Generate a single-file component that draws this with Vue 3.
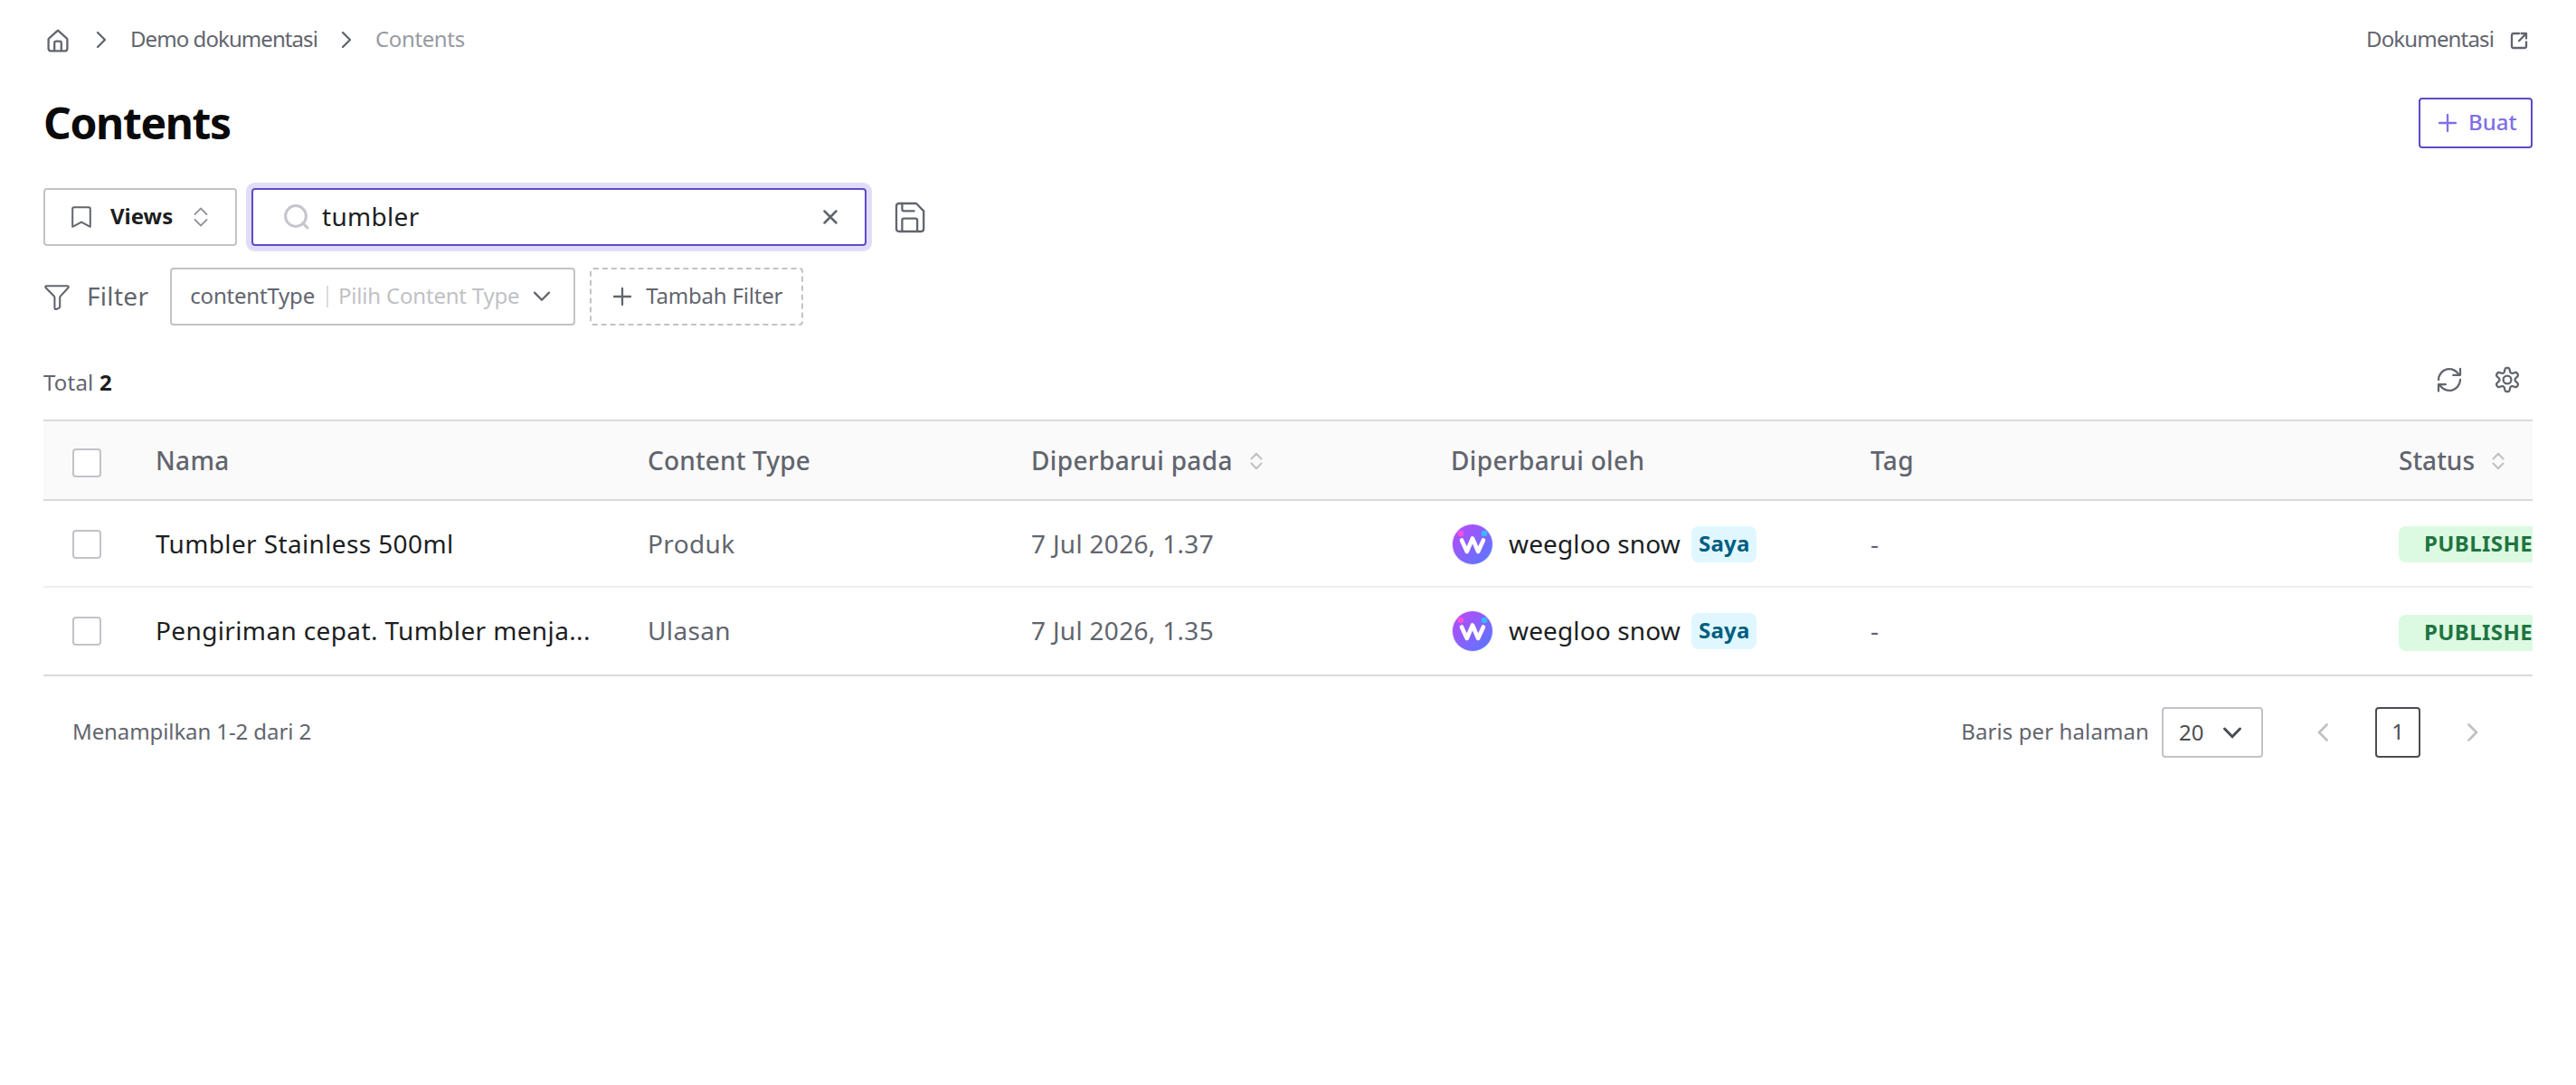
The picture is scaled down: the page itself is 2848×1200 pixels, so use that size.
<script setup>
import { ref } from 'vue'

const query = ref('tumbler')

const rows = [
  { name: 'Tumbler Stainless 500ml', type: 'Produk', updated: '7 Jul 2026, 1.37', by: 'weegloo snow', tag: '-', status: 'PUBLISHED' },
  { name: 'Pengiriman cepat. Tumbler menja...', type: 'Ulasan', updated: '7 Jul 2026, 1.35', by: 'weegloo snow', tag: '-', status: 'PUBLISHED' }
]

// Six-lobed gear outline around the centre of a 32x32 box.
const gear = Array.from({ length: 120 }, (_, i) => {
  const a = (i / 120) * Math.PI * 2
  const r = 10.9 + 2.3 * Math.tanh(1.5 * Math.cos(6 * a)) / Math.tanh(1.5)
  return `${i ? 'L' : 'M'}${(16 + r * Math.sin(a)).toFixed(2)} ${(16 - r * Math.cos(a)).toFixed(2)}`
}).join('') + 'Z'
</script>

<template>
  <div class="page">
    <header class="topbar">
      <nav class="crumbs">
        <svg class="home" viewBox="0 0 24 26" width="24" height="26"><path d="M12 1.6 2.2 10.3Q1.6 10.8 1.6 11.6V21.4Q1.6 24.4 4.6 24.4H19.4Q22.4 24.4 22.4 21.4V11.6Q22.4 10.8 21.8 10.3Z" /><path d="M8.2 24.2V15.5Q8.2 13.6 10 13.6H14Q15.8 13.6 15.8 15.5V24.2" /></svg>
        <svg class="sep s1" viewBox="0 0 12 20" width="12" height="20"><path d="M2 2 10 10 2 18" /></svg>
        <span class="crumb">Demo dokumentasi</span>
        <svg class="sep s2" viewBox="0 0 12 20" width="12" height="20"><path d="M2 2 10 10 2 18" /></svg>
        <span class="crumb current">Contents</span>
      </nav>
      <a class="docs">
        <span>Dokumentasi</span>
        <svg viewBox="0 0 20 20" width="20" height="20"><path d="M10 2H4Q2 2 2 4V16Q2 18 4 18H16Q18 18 18 16V11.5M12.5 2H18V7.5M18 2 10 10.2" /></svg>
      </a>
    </header>

    <div class="titlebar">
      <h1>Contents</h1>
      <button class="create">
        <svg viewBox="0 0 20 20" width="20" height="20"><path d="M10 1V19M1 10H19" /></svg>
        <span>Buat</span>
      </button>
    </div>

    <div class="searchbar">
      <button class="views">
        <svg class="bookmark" viewBox="0 0 22 24" width="22" height="24"><path d="M1.2 22.8V3Q1.2 1.2 3 1.2H19Q20.8 1.2 20.8 3V22.8L11 17.6Z" /></svg>
        <span>Views</span>
        <svg class="updown" viewBox="0 0 16 22" width="16" height="22"><path d="M1.5 8 8 1.5 14.5 8M1.5 14 8 20.5 14.5 14" /></svg>
      </button>
      <div class="search">
        <svg class="lens" viewBox="0 0 28 28" width="28" height="28"><circle cx="13" cy="13" r="11.4" /><path d="M21 21 26 26" /></svg>
        <span class="query">{{ query }}</span>
        <svg class="clear" viewBox="0 0 16 16" width="16" height="16"><path d="M1.5 1.5 14.5 14.5M14.5 1.5 1.5 14.5" /></svg>
      </div>
      <svg class="save" viewBox="0 0 34 34" width="34" height="34"><path d="M5 2H24L32.2 10.4V30Q32.2 33 29.2 33H5Q2 33 2 30V5Q2 2 5 2Z" /><path d="M8.4 2V8.5Q8.4 10.4 10.3 10.4H21.6M8.4 33V20.6Q8.4 18.7 10.3 18.7H23.2Q25.1 18.7 25.1 20.6V33" /></svg>
    </div>

    <div class="filters">
      <svg class="funnel" viewBox="0 0 28 28" width="28" height="28"><path d="M2.6 1.2H25.4Q27.4 1.2 26.4 3.2L17.8 12.6Q17.2 13.3 17.2 14.3V24Q17.2 25 16.4 25.6L13.2 27Q11.6 27.3 11.4 25.6V14.3Q11.4 13.3 10.8 12.6L1.6 3.2Q.6 1.2 2.6 1.2Z" /></svg>
      <span class="flabel">Filter</span>
      <div class="select">
        <span class="key">contentType</span>
        <i class="bar"></i>
        <span class="hint">Pilih Content Type</span>
        <svg viewBox="0 0 20 12" width="20" height="12"><path d="M2 1.6 10 9.8 18 1.6" /></svg>
      </div>
      <button class="add">
        <svg viewBox="0 0 20 20" width="20" height="20"><path d="M10 1V19M1 10H19" /></svg>
        <span>Tambah Filter</span>
      </button>
    </div>

    <div class="summary">
      <span class="total">Total <b>2</b></span>
      <div class="tools">
        <svg viewBox="0 0 32 32" width="32" height="32"><path d="M4 16A12 12 0 0 1 26.5 10.3M28 16A12 12 0 0 1 5.5 21.7M20.2 10.8H28V4M11.8 21.2H4V28.5" /></svg>
        <svg class="gear" viewBox="0 0 32 32" width="32" height="32"><path :d="gear" /><circle cx="16" cy="16" r="4.4" /></svg>
      </div>
    </div>

    <div class="table">
      <div class="row head">
        <div class="check"><i class="box"></i></div>
        <div>Nama</div>
        <div class="tight">Content Type</div>
        <div>Diperbarui pada<svg viewBox="0 0 14 20" width="14" height="20"><path d="M1.5 7.5 7 1.8 12.5 7.5M1.5 12.5 7 18.2 12.5 12.5" /></svg></div>
        <div>Diperbarui oleh</div>
        <div>Tag</div>
        <div class="status-head">Status<svg viewBox="0 0 14 20" width="14" height="20"><path d="M1.5 7.5 7 1.8 12.5 7.5M1.5 12.5 7 18.2 12.5 12.5" /></svg></div>
      </div>
      <div v-for="row in rows" :key="row.name" class="row">
        <div class="check"><i class="box"></i></div>
        <div class="name">{{ row.name }}</div>
        <div>{{ row.type }}</div>
        <div class="date">{{ row.updated }}</div>
        <div class="by">
          <svg class="avatar" viewBox="0 0 48 48" width="48" height="48">
            <defs>
              <linearGradient id="disc" x1="0" y1="0" x2="1" y2="1">
                <stop offset="0.1" stop-color="#b44cfb" />
                <stop offset="0.9" stop-color="#5b76ff" />
              </linearGradient>
            </defs>
            <circle cx="24" cy="24" r="23" fill="#efe9fd" />
            <circle cx="24" cy="24" r="22" fill="url(#disc)" />
            <circle cx="11" cy="12" r="3.3" fill="#f453da" />
            <circle cx="37" cy="12" r="3.3" fill="#37b9f7" />
            <path d="M12 19.5 17.8 32 24 17.5 30.2 32 36 19.5" fill="none" stroke="#fff" stroke-width="4.6" stroke-linecap="round" stroke-linejoin="round" />
          </svg>
          <span class="person">{{ row.by }}</span>
          <span class="me">Saya</span>
        </div>
        <div>{{ row.tag }}</div>
        <div class="state"><span class="badge">{{ row.status }}</span></div>
      </div>
    </div>

    <footer class="pager">
      <span class="range">Menampilkan 1-2 dari 2</span>
      <span class="per">Baris per halaman</span>
      <div class="size">20<svg viewBox="0 0 20 13" width="20" height="13"><path d="M1.5 2 10 10.8 18.5 2" /></svg></div>
      <svg class="arrow prev" viewBox="0 0 12 20" width="12" height="20"><path d="M10.5 1.5 2 10 10.5 18.5" /></svg>
      <span class="num">1</span>
      <svg class="arrow next" viewBox="0 0 12 20" width="12" height="20"><path d="M1.5 1.5 10 10 1.5 18.5" /></svg>
    </footer>
  </div>
</template>

<style>
body { margin: 0; background: #fff; }
</style>

<style scoped>
.page {
  box-sizing: border-box;
  height: 1200px;
  padding: 0 48px;
  overflow: hidden;
  background: #fff;
  color: #62656e;
  font: 24px/32px "Noto Sans", sans-serif;
}
.page *, .page *::before { box-sizing: border-box; }
svg { display: block; flex: none; fill: none; stroke: #62656e; stroke-width: 2.3; stroke-linecap: round; stroke-linejoin: round; overflow: visible; }
button { font: inherit; color: inherit; background: none; padding: 0; margin: 0; }
span, .row > div { white-space: pre; }

.topbar { display: flex; align-items: center; justify-content: space-between; height: 86px; }
.crumbs { display: flex; align-items: center; }
.home { margin: 3px 0 0 4px; }
.sep { margin-top: 2px; }
.s1 { margin-left: 30px; }
.s2 { margin-left: 26px; }
.crumb { margin-left: 26px; letter-spacing: -0.93px; }
.crumb.current { margin-left: 26px; color: #979aa2; letter-spacing: -0.36px; }
.docs { display: flex; align-items: center; padding-right: 5px; letter-spacing: -0.85px; }
.docs svg { margin: 4px 0 0 18px; }

.titlebar { display: flex; align-items: center; justify-content: space-between; height: 100px; }
h1 { margin: 0; color: #0a0a0a; font-size: 48px; line-height: 64px; font-weight: 700; letter-spacing: -1.35px; }
.create { display: flex; align-items: center; width: 126px; height: 56px; padding-left: 20px; border: 2px solid #6049c8; border-radius: 4px; color: #806fe6; font-weight: 500; }
.create svg { stroke: #806fe6; }
.create span { margin-left: 13px; line-height: 32px; margin-top: -2px; }

.searchbar { display: flex; align-items: center; height: 64px; margin-top: 22px; }
.views { display: flex; align-items: center; width: 214px; height: 64px; padding-left: 29px; border: 2px solid #c2c3c7; border-radius: 4px; color: #1c1e22; font-weight: 700; }
.views span { margin-left: 21px; margin-top: -2px; }
.bookmark { stroke-width: 2; }
.updown { margin-left: 23px; stroke: #93959c; stroke-width: 1.8; }
.search { display: flex; align-items: center; width: 680px; height: 64px; margin-left: 16px; padding: 0 30px 0 34px; border: 2px solid #6049c8; border-radius: 4px; box-shadow: 0 0 0 6px #e1ddf8; color: #1c1e22; font-size: 28px; }
.lens { stroke: #c5c6ca; stroke-width: 3; }
.query { flex: 1; margin: -2px 0 0 14px; letter-spacing: 0.3px; }
.clear { stroke-width: 2.5; }
.save { margin: -1px 0 0 31px; }

.filters { display: flex; align-items: center; height: 64px; margin-top: 24px; }
.funnel { margin: 1px 0 0 1px; stroke-width: 2.1; }
.flabel { margin: -2px 0 0 19px; font-size: 28px; letter-spacing: 0.3px; }
.select { display: flex; align-items: center; width: 448px; height: 64px; margin-left: 24px; padding-left: 20px; border: 2px solid #c2c3c7; border-radius: 4px; letter-spacing: -0.2px; }
.select span { margin-top: -3px; }
.bar { width: 2px; height: 24px; margin-left: 13px; background: #dadbdd; }
.hint { margin-left: 11px; color: #c0c1c5; }
.select svg { margin-left: 15px; }
.add { display: flex; align-items: center; width: 236px; height: 64px; margin-left: 16px; padding-left: 24px; border: 2px dashed #c2c3c7; border-radius: 4px; letter-spacing: -0.2px; }
.add span { margin: -3px 0 0 16px; }

.summary { display: flex; align-items: center; justify-content: space-between; height: 104px; }
.total { padding-top: 22px; letter-spacing: 0.2px; }
.total b { color: #1c1e22; }
.tools { display: flex; gap: 32px; padding: 16px 12px 0 0; }

.table { overflow: hidden; border-top: 2px solid #dadbdd; border-bottom: 2px solid #dadbdd; }
.row { display: grid; grid-template-columns: 124px 544px 424px 464px 464px 584px 240px; width: 2844px; height: 96px; align-items: center; border-top: 2px solid #efeff0; font-size: 28px; letter-spacing: 0.37px; }
.row > div { display: flex; align-items: center; height: 38px; }
.row > .check { padding-left: 32px; }
.row > .check, .row > .by, .row > .state { margin-top: 2px; }
.row:nth-child(2) { border-top-color: #dadbdd; }
.row:nth-child(3) { height: 98px; }
.row:nth-child(3) > div { margin-top: -2px; }
.row:nth-child(3) > .check, .row:nth-child(3) > .by { margin-top: 0; }
.row:nth-child(3) > .state { margin-top: 4px; }
.row > .date { letter-spacing: 0.3px; }
.head { height: 86px; border: 0; background: #fafafa; font-weight: 500; letter-spacing: 0.34px; }
.head > .check { margin-top: 6px; }
.head > .tight { letter-spacing: 0.15px; }
.head > .status-head { letter-spacing: 0; }
.head svg { margin: 1px 0 0 19px; stroke: #c0c1c5; stroke-width: 2; }
.box { width: 32px; height: 32px; border: 2px solid #c2c3c7; border-radius: 4px; background: #fff; }
.name { color: #1c1e22; }
.avatar { stroke: none; }
.person { margin: -2px 0 0 16px; color: #1c1e22; letter-spacing: 0.14px; }
.me { height: 40px; margin-left: 12px; padding: 0 8px; border-radius: 8px; background: #e0f7ff; color: #005e80; font-size: 24px; line-height: 38px; font-weight: 700; letter-spacing: 0.2px; }
.badge { height: 40px; padding: 0 28px; border-radius: 8px; background: #dcfae1; color: #1f7440; font-size: 24px; line-height: 38px; font-weight: 700; letter-spacing: 0.4px; }

.pager { display: flex; align-items: center; height: 124px; padding-left: 32px; }
.range { flex: 1; margin-top: -2px; letter-spacing: -0.1px; }
.per { margin-top: -2px; letter-spacing: 0.1px; }
.size { display: flex; align-items: center; width: 112px; height: 56px; margin-left: 14px; padding-left: 17px; border: 2px solid #c2c3c7; border-radius: 4px; color: #4b4d52; }
.size svg { margin-left: 22px; stroke: #4b4d52; stroke-width: 3; }
.arrow { stroke: #c0c1c5; stroke-width: 2.8; }
.prev { margin-left: 60px; }
.num { width: 50px; height: 56px; margin-left: 52px; border: 2px solid #4b4d52; border-radius: 4px; color: #4b4d52; line-height: 50px; text-align: center; }
.next { margin: 0 60px 0 52px; }
</style>
